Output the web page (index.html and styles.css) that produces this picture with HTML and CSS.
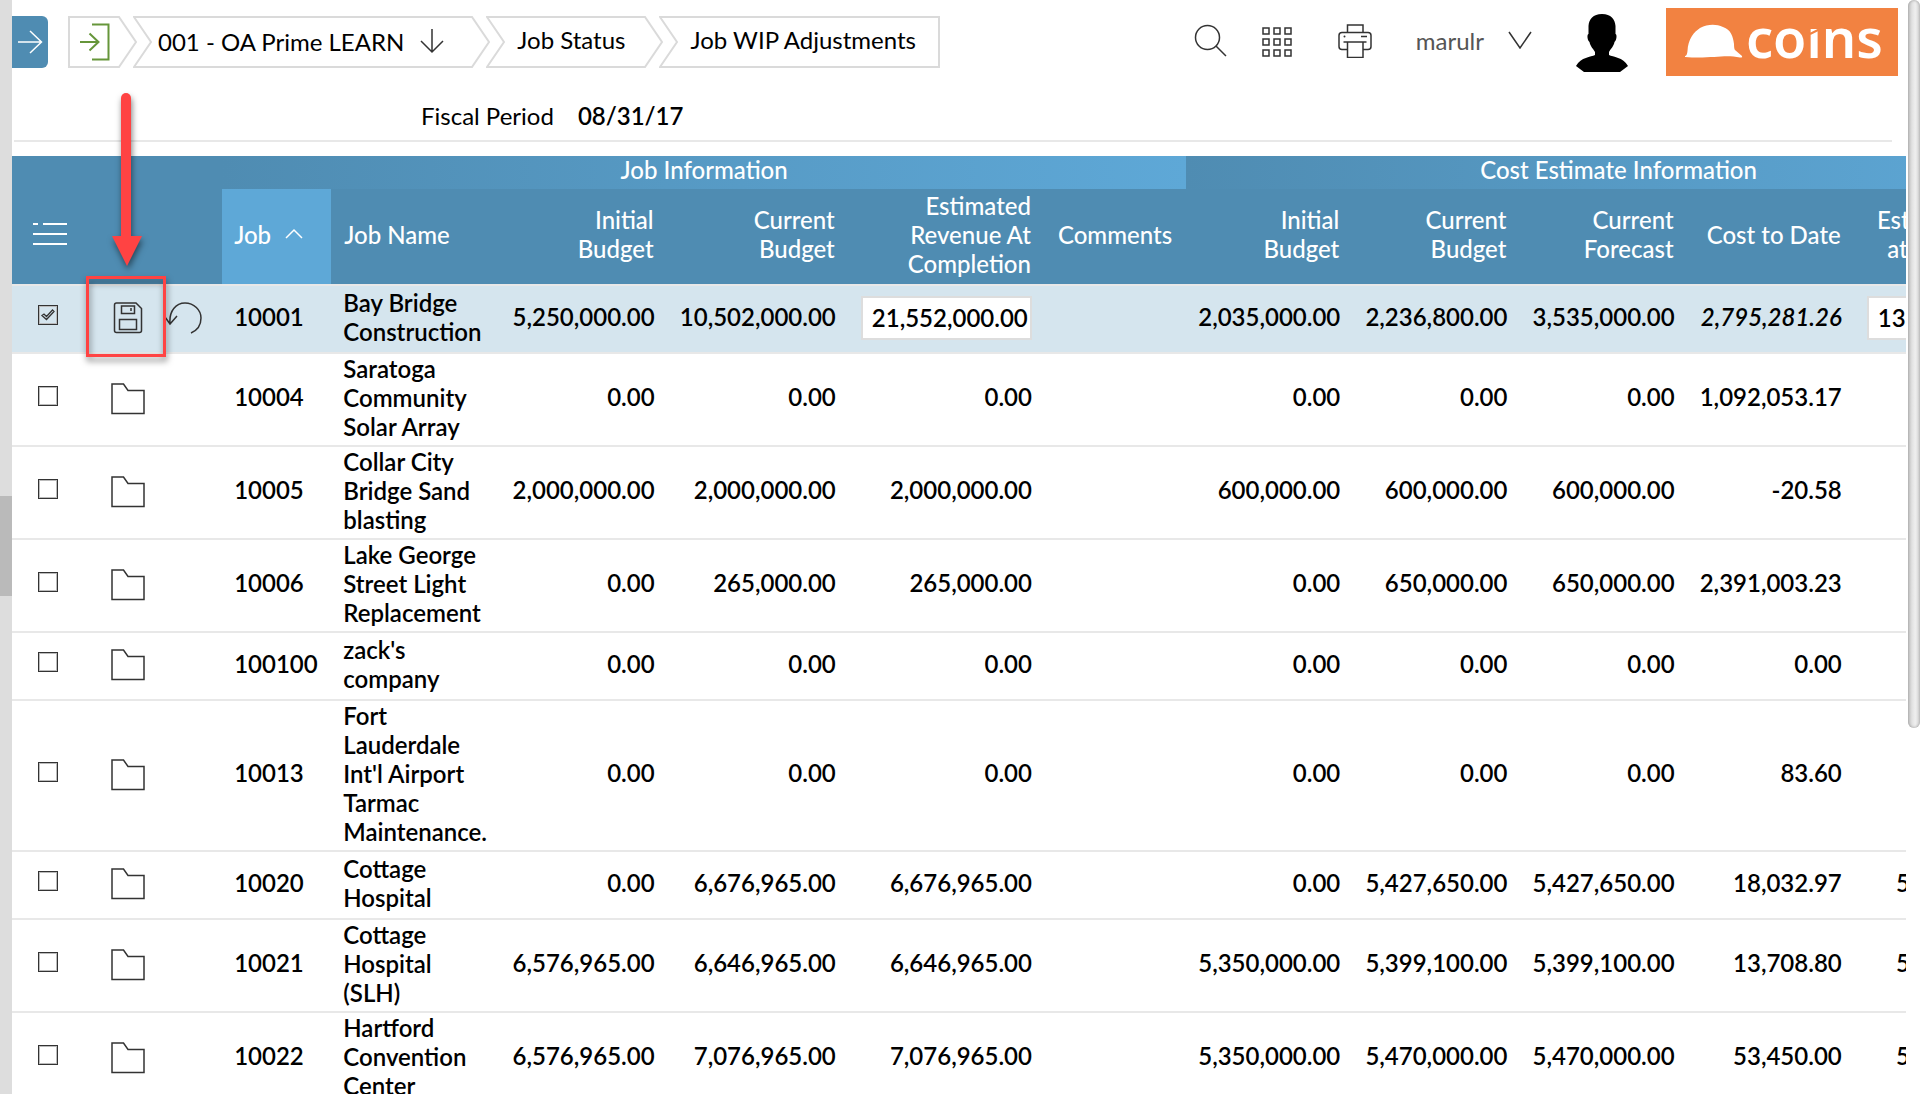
FILE: index.html
```html
<!DOCTYPE html>
<html lang="en">
<head>
<meta charset="utf-8">
<title>Job WIP Adjustments</title>
<link rel="stylesheet" href="styles.css">
</head>
<body>
<svg class="defs" aria-hidden="true">
  <symbol id="folder" viewBox="0 0 34 32"><path d="M1 1H12.500L17 7.500H33V30.500H1Z"/></symbol>
  <symbol id="edge-left" viewBox="0 0 20 52"><path d="M20 1H1L18 26L1 51H20"/></symbol>
  <symbol id="edge-right" viewBox="0 0 20 52"><path d="M0 1H1L18 26L1 51H0"/></symbol>
</svg>
<div class="app">
  <div class="side-rail"><div class="side-grip"></div></div>
  <main class="page">
    <header class="topbar">
      <button class="menu-btn" aria-label="Open menu"><svg width="36" height="52" viewBox="0 0 36 52"><path d="M6 26H29M18 15L29.500 26L18 37"/></svg></button>
      <nav class="crumbs" aria-label="Breadcrumb">
        <a class="crumb crumb-first" href="#" aria-label="Home"><span class="crumb-body"><svg class="exit" width="32" height="38" viewBox="0 0 32 38"><path d="M1 19H20M10.500 10.500L19.500 19L10.500 27.500M13 1.500H29.500V36.500H13"/></svg></span><svg class="edge"><use href="#edge-right"/></svg></a>
        <a class="crumb crumb-company" href="#"><svg class="edge"><use href="#edge-left"/></svg><span class="crumb-body">001 - OA Prime LEARN <svg class="down" width="24" height="26" viewBox="0 0 24 26"><path d="M12 1V24M1 13L12 24L23 13"/></svg></span><svg class="edge"><use href="#edge-right"/></svg></a>
        <a class="crumb crumb-status" href="#"><svg class="edge"><use href="#edge-left"/></svg><span class="crumb-body">Job Status</span><svg class="edge"><use href="#edge-right"/></svg></a>
        <a class="crumb crumb-last" href="#"><svg class="edge"><use href="#edge-left"/></svg><span class="crumb-body">Job WIP Adjustments</span></a>
      </nav>
      <div class="tools">
        <button class="tool" aria-label="Search"><svg width="34" height="34" viewBox="0 0 34 34"><circle cx="13.500" cy="13.500" r="12"/><path d="M22 22L32 32"/></svg></button>
        <button class="tool" aria-label="Applications"><svg width="30" height="34" viewBox="0 0 30 34"><path d="M1 4H7V10H1ZM12 4H18V10H12ZM23 4H29V10H23ZM1 15H7V21H1ZM12 15H18V21H12ZM23 15H29V21H23ZM1 26H7V32H1ZM12 26H18V32H12ZM23 26H29V32H23Z"/></svg></button>
        <button class="tool tool-print" aria-label="Print"><svg width="34" height="34" viewBox="0 0 34 34"><path d="M9.500 8.500V1H25V8.500M9.500 25.500H4Q1 25.500 1 22.500V11.500Q1 8.500 4 8.500H30Q33 8.500 33 11.500V22.500Q33 25.500 30 25.500H25M5.500 18H28.500M9.500 18H25V33.500H9.500ZM23 12.500H29"/><circle class="dot" cx="6.500" cy="12.500" r="1"/></svg></button>
        <button class="user">marulr <svg width="24" height="18" viewBox="0 0 24 18"><path d="M1 1L12 17L23 1"/></svg></button>
        <svg class="avatar" width="54" height="60" viewBox="0 0 54 60"><path d="M27 1C18 1 14 6 13.500 13V21C12 21 12 27 14.500 29C15.500 34 18 35 20 39V42C16 44 6 44 1 53L9 59H45L53 53C48 44 38 44 34 42V39C36 35 38.500 34 39.500 29C42 27 42 21 40.500 21V13C40 6 36 1 27 1Z"/></svg>
        <svg class="logo" width="232" height="68" viewBox="0 0 232 68" role="img" aria-label="coins">
          <clipPath id="lower"><rect x="78" y="18" width="150" height="40"/></clipPath>
          <path class="hat" d="M19 48Q21 48 21.500 43C22 31 28 24 34 20C42 16 50 16 57 19C65 22 67 28 68 36Q68 41 69 42L76 48Q77 50 74 49.500C58 46 46 51 19 49Z"/>
          <text x="80" y="50" clip-path="url(#lower)">coins</text>
          <path class="slit" d="M144 26L156 20"/>
        </svg>
      </div>
    </header>
    <section class="period"><span>Fiscal Period</span><b>08/31/17</b></section>
    <div class="grid">
      <table>
        <colgroup><col class="c-check"><col class="c-act"><col class="c-job"><col class="c-name"><col class="c-num"><col class="c-mid"><col class="c-wide"><col class="c-com"><col class="c-num"><col class="c-num"><col class="c-num"><col class="c-num"><col class="c-wide"></colgroup>
        <thead>
          <tr class="groups"><th colspan="2"></th><th class="group" colspan="6">Job Information</th><th class="group" colspan="5">Cost Estimate Information</th></tr>
          <tr class="heads">
            <th class="check"><svg width="34" height="24" viewBox="0 0 34 24"><path d="M0 2H5M10 2H34M0 12H34M0 22H34"/></svg></th><th></th>
            <th class="sorted">Job <svg width="18" height="12" viewBox="0 0 18 12"><path d="M1 10L9 2L17 10"/></svg></th>
            <th>Job Name</th><th class="n">Initial<br>Budget</th><th class="n">Current<br>Budget</th><th class="n">Estimated<br>Revenue At<br>Completion</th><th>Comments</th>
            <th class="n">Initial<br>Budget</th><th class="n">Current<br>Budget</th><th class="n">Current<br>Forecast</th><th class="n">Cost to Date</th><th class="n">Estimated Cost<br>at Completion</th>
          </tr>
        </thead>
        <tbody>
          <tr class="selected"><td class="check"><input type="checkbox" checked aria-label="Select 10001"></td><td><div class="acts"><button aria-label="Save"><svg class="save" width="34" height="32" viewBox="0 0 34 32"><path d="M5.500 1H25L30.500 6.500V28.500Q30.500 30.500 28.500 30.500H5.500Q3.500 30.500 3.500 28.500V3Q3.500 1 5.500 1ZM10.500 4H23.500V11.500H10.500ZM20 6V9M8.500 17.500H25.500V27.500H8.500Z"/></svg></button><button aria-label="Undo"><svg class="undo" width="38" height="34" viewBox="0 0 38 34"><path d="M5 22C4 10 11 2 20 2C29 2 36 9 36 17C36 24 33 29 26 32M0 16L5 23L12 15"/></svg></button></div></td><td>10001</td><td class="name">Bay Bridge Construction</td><td class="n">5,250,000.00</td><td class="n">10,502,000.00</td><td class="n"><input type="text" value="21,552,000.00" aria-label="Estimated revenue at completion"></td><td></td><td class="n">2,035,000.00</td><td class="n">2,236,800.00</td><td class="n">3,535,000.00</td><td class="n"><i>2,795,281.26</i></td><td class="n"><input type="text" value="13,450,000.00" aria-label="Estimated cost at completion"></td></tr>
          <tr><td class="check"><input type="checkbox" aria-label="Select 10004"></td><td><div class="acts"><button aria-label="Open"><svg width="34" height="32"><use href="#folder"/></svg></button></div></td><td>10004</td><td class="name">Saratoga Community Solar Array</td><td class="n">0.00</td><td class="n">0.00</td><td class="n">0.00</td><td></td><td class="n">0.00</td><td class="n">0.00</td><td class="n">0.00</td><td class="n">1,092,053.17</td><td></td></tr>
          <tr><td class="check"><input type="checkbox" aria-label="Select 10005"></td><td><div class="acts"><button aria-label="Open"><svg width="34" height="32"><use href="#folder"/></svg></button></div></td><td>10005</td><td class="name">Collar City Bridge Sand blasting</td><td class="n">2,000,000.00</td><td class="n">2,000,000.00</td><td class="n">2,000,000.00</td><td></td><td class="n">600,000.00</td><td class="n">600,000.00</td><td class="n">600,000.00</td><td class="n">-20.58</td><td></td></tr>
          <tr><td class="check"><input type="checkbox" aria-label="Select 10006"></td><td><div class="acts"><button aria-label="Open"><svg width="34" height="32"><use href="#folder"/></svg></button></div></td><td>10006</td><td class="name">Lake George Street Light Replacement</td><td class="n">0.00</td><td class="n">265,000.00</td><td class="n">265,000.00</td><td></td><td class="n">0.00</td><td class="n">650,000.00</td><td class="n">650,000.00</td><td class="n">2,391,003.23</td><td></td></tr>
          <tr><td class="check"><input type="checkbox" aria-label="Select 100100"></td><td><div class="acts"><button aria-label="Open"><svg width="34" height="32"><use href="#folder"/></svg></button></div></td><td>100100</td><td class="name">zack's company</td><td class="n">0.00</td><td class="n">0.00</td><td class="n">0.00</td><td></td><td class="n">0.00</td><td class="n">0.00</td><td class="n">0.00</td><td class="n">0.00</td><td></td></tr>
          <tr><td class="check"><input type="checkbox" aria-label="Select 10013"></td><td><div class="acts"><button aria-label="Open"><svg width="34" height="32"><use href="#folder"/></svg></button></div></td><td>10013</td><td class="name">Fort Lauderdale Int'l Airport Tarmac Maintenance.</td><td class="n">0.00</td><td class="n">0.00</td><td class="n">0.00</td><td></td><td class="n">0.00</td><td class="n">0.00</td><td class="n">0.00</td><td class="n">83.60</td><td></td></tr>
          <tr><td class="check"><input type="checkbox" aria-label="Select 10020"></td><td><div class="acts"><button aria-label="Open"><svg width="34" height="32"><use href="#folder"/></svg></button></div></td><td>10020</td><td class="name">Cottage Hospital</td><td class="n">0.00</td><td class="n">6,676,965.00</td><td class="n">6,676,965.00</td><td></td><td class="n">0.00</td><td class="n">5,427,650.00</td><td class="n">5,427,650.00</td><td class="n">18,032.97</td><td class="n">5,427,650.00</td></tr>
          <tr><td class="check"><input type="checkbox" aria-label="Select 10021"></td><td><div class="acts"><button aria-label="Open"><svg width="34" height="32"><use href="#folder"/></svg></button></div></td><td>10021</td><td class="name">Cottage Hospital (SLH)</td><td class="n">6,576,965.00</td><td class="n">6,646,965.00</td><td class="n">6,646,965.00</td><td></td><td class="n">5,350,000.00</td><td class="n">5,399,100.00</td><td class="n">5,399,100.00</td><td class="n">13,708.80</td><td class="n">5,399,100.00</td></tr>
          <tr><td class="check"><input type="checkbox" aria-label="Select 10022"></td><td><div class="acts"><button aria-label="Open"><svg width="34" height="32"><use href="#folder"/></svg></button></div></td><td>10022</td><td class="name">Hartford Convention Center</td><td class="n">6,576,965.00</td><td class="n">7,076,965.00</td><td class="n">7,076,965.00</td><td></td><td class="n">5,350,000.00</td><td class="n">5,470,000.00</td><td class="n">5,470,000.00</td><td class="n">53,450.00</td><td class="n">5,470,000.00</td></tr>
        </tbody>
      </table>
    </div>
  </main>
  <div class="scroll-track"><div class="scroll-thumb"></div></div>
  <svg class="callout-arrow" width="60" height="200" viewBox="0 0 60 200"><path d="M29 20V160" stroke-width="10" stroke-linecap="round"/><path class="head" d="M15 158H45L30 188Z"/></svg>
  <div class="callout-box"></div>
</div>
</body>
</html>
```
FILE: styles.css
```css
* { box-sizing: border-box; }
body {
  margin: 0;
  background: #fff;
  color: #000;
  font-family: Lato, Carlito, "Open Sans", sans-serif;
  font-size: 24px;
  line-height: 29px;
}
button { border: 0; padding: 0; background: none; font: inherit; color: inherit; cursor: pointer; }
a { color: inherit; text-decoration: none; }
svg { display: block; flex: none; fill: none; stroke: #333; stroke-width: 2px; }
.defs { position: absolute; width: 0; height: 0; }

.app { position: relative; display: flex; height: 100vh; overflow: hidden; }
.side-rail { flex: none; width: 12px; padding-bottom: 2px; background: #ddd; display: flex; align-items: center; }
.side-grip { width: 12px; height: 100px; background: #bababa; }
.page { flex: 1; min-width: 0; overflow: hidden; }
.scroll-track { flex: none; width: 14px; padding-left: 2px; }
.scroll-thumb {
  height: 728px;
  border-radius: 6px;
  background: linear-gradient(90deg, #c4c4c4, #e2e2e2 35%, #efefef 60%, #d6d6d6);
  box-shadow: inset 0 0 3px #999;
}

/* Top bar */
.topbar { display: flex; height: 90px; padding-right: 8px; }
.menu-btn { width: 36px; height: 52px; margin-top: 16px; background: #4f8cb2; border-radius: 0 6px 6px 0; }
.menu-btn svg { stroke: #fff; stroke-width: 1.5px; }
.crumbs { display: flex; height: 52px; margin: 16px 0 0 20px; white-space: nowrap; }
.crumb { display: flex; }
.crumb + .crumb { margin-left: -5px; }
.edge { width: 20px; height: 52px; stroke: #dadada; }
.crumb-body { display: flex; align-items: center; border: solid #dadada; border-width: 2px 0; padding: 0 19px 6px 11px; }
.crumb-first .crumb-body { border-left-width: 2px; padding: 0 7px 0 9px; }
.crumb-company .crumb-body { padding: 0 27px 2px 5px; gap: 16px; }
.crumb-last .crumb-body { border-right-width: 2px; padding-right: 22px; }
.exit { stroke: #66963a; }
.crumb .down { stroke-width: 1.5px; }

.tools { display: flex; margin-left: auto; }
.tool { height: 34px; margin: 24px 0 0 34px; }
.tool svg { stroke-width: 1.5px; }
.tool-print { margin-left: 46px; }
.dot { fill: #333; stroke: none; }
.user { display: flex; align-items: center; gap: 24px; height: 34px; margin: 24px 0 0 44px; padding-bottom: 2px; color: #555; }
.user svg { stroke-width: 1.5px; }
.avatar { margin: 13px 0 0 43px; fill: #000; stroke: none; }
.logo { margin: 8px 0 0 37px; background: #f28241; stroke: none; }
.logo .hat { fill: #fff; }
.logo text { fill: #fff; font: 600 54px "Noto Sans", sans-serif; }
.logo .slit { stroke: #f28241; stroke-width: 2px; }

.period { display: flex; gap: 24px; height: 52px; margin: 0 14px 14px 2px; padding: 11px 0 0 407px; border-bottom: 2px solid #e8e8e8; }
.period b { font-weight: 600; }

/* Job grid */
.grid { overflow: hidden; }
table { width: 2039px; table-layout: fixed; border-collapse: separate; border-spacing: 0; }
.c-check { width: 74px; }
.c-act { width: 136px; }
.c-job { width: 109px; }
.c-name { width: 169px; }
.c-num { width: 167px; }
.c-mid { width: 181px; }
.c-wide { width: 196px; }
.c-com { width: 141px; }
th { padding: 0 14px 5px 13px; font-weight: 500; color: #fff; text-align: left; background: #4f8cb2; white-space: nowrap; }
.groups th { height: 33px; padding: 0 0 6px; line-height: 27px; text-align: center; }
.groups .group { background: linear-gradient(90deg, #4f8cb2, #5ea8d7); }
.heads th { height: 97px; border-bottom: 2px solid #e8e8e8; }
.heads svg { stroke: #fff; }
.heads .sorted { background: #5ea8d7; padding-left: 12px; }
.sorted svg { display: inline-block; margin-left: 8px; vertical-align: 4px; stroke-width: 1.5px; }
td { height: 68px; padding: 0 13px 6px 12px; font-weight: 600; border-bottom: 2px solid #e8e8e8; vertical-align: middle; }
.name { padding: 0 10px 4px 12px; }
.n { text-align: right; }
td:last-child { overflow: hidden; }
th.check { padding: 0 0 5px 21px; }
td.check { padding: 0 0 8px 26px; }
.selected td { background: #d5e5ee; }
.acts { display: flex; gap: 20px; padding-left: 13px; padding-top: 4px; }
.acts svg { stroke-width: 1.5px; }
input[type="checkbox"] {
  display: block;
  appearance: none;
  width: 20px;
  height: 20px;
  margin: 0;
  border: 1px solid #333;
  box-shadow: inset 0 0 0 1px #bbb;
}
input[type="checkbox"]:checked {
  background: url("data:image/svg+xml,%3Csvg xmlns='http://www.w3.org/2000/svg' viewBox='0 0 18 18'%3E%3Cpath d='M3 9.500L5 8L7.500 10.500L13.500 4L15 5.500L7.500 13.500Z' fill='none' stroke='%23333' stroke-width='1.300'/%3E%3C/svg%3E");
}
input[type="text"] {
  display: block;
  width: 171px;
  height: 44px;
  padding: 0 2px 2px 0;
  margin-top: 4px;
  border: 2px solid #ddd;
  background: #fff;
  font: inherit;
  text-align: right;
}

/* Annotation */
.callout-arrow { position: absolute; left: 97px; top: 78px; stroke: #ff4343; filter: drop-shadow(1px 4px 3px rgba(0, 0, 0, .5)); }
.callout-arrow .head { fill: #ff4343; stroke: none; }
.callout-box { position: absolute; left: 86px; top: 276px; width: 80px; height: 81px; border: 3px solid #ff4343; filter: drop-shadow(1px 4px 3px rgba(0, 0, 0, .5)); }
```
